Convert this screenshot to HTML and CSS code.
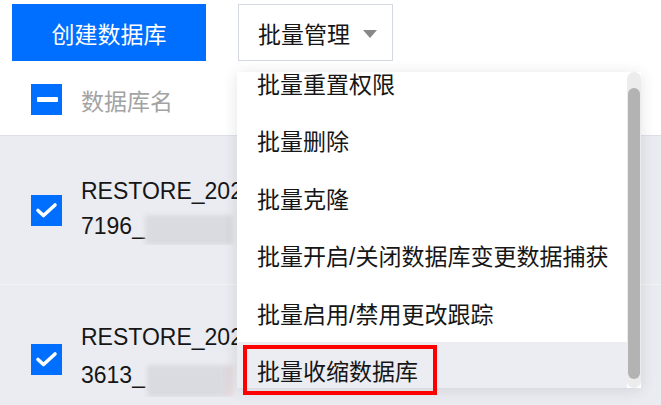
FILE: index.html
```html
<!DOCTYPE html>
<html lang="zh-CN">
<head>
<meta charset="utf-8">
<title>数据库</title>
<link rel="stylesheet" href="styles.css">
</head>
<body>
<div class="page">
  <div class="toolbar">
    <button class="btn btn-primary">创建数据库</button>
    <button class="btn btn-default"><span class="btn-label">批量管理</span><i class="caret"></i></button>
  </div>
  <div class="table">
    <div class="thead">
      <span class="cb">
        <svg width="31" height="31" viewBox="0 0 31 31"><rect x="6" y="13" width="21" height="5" rx="1" fill="#fff"/></svg>
      </span>
      <span class="th-text">数据库名</span>
    </div>
    <div class="row">
      <span class="cb">
        <svg width="31" height="31" viewBox="0 0 31 31"><polyline points="7,15.5 12.5,20.5 24,10" fill="none" stroke="#fff" stroke-width="3.6" stroke-linecap="round" stroke-linejoin="round"/></svg>
      </span>
      <div class="name">
        <div class="line">RESTORE_20240308_150000_9127</div>
        <div class="line">7196_<span class="blur b1"></span></div>
      </div>
    </div>
    <div class="row">
      <span class="cb">
        <svg width="31" height="31" viewBox="0 0 31 31"><polyline points="7,15.5 12.5,20.5 24,10" fill="none" stroke="#fff" stroke-width="3.6" stroke-linecap="round" stroke-linejoin="round"/></svg>
      </span>
      <div class="name">
        <div class="line">RESTORE_20240308_150000_4418</div>
        <div class="line">3613_<span class="blur b2"></span></div>
      </div>
    </div>
  </div>

  <div class="dropdown">
    <ul class="menu">
      <li class="item">批量重置权限</li>
      <li class="item">批量删除</li>
      <li class="item">批量克隆</li>
      <li class="item">批量开启/关闭数据库变更数据捕获</li>
      <li class="item">批量启用/禁用更改跟踪</li>
      <li class="item active">批量收缩数据库</li>
    </ul>
    <div class="scroll-track"><div class="scroll-thumb"></div></div>
  </div>
  <div class="annot"></div>
</div>
</body>
</html>
```

FILE: styles.css
```css
* { box-sizing: border-box; }
html, body {
  margin: 0;
  padding: 0;
  background: #fff;
}
body {
  width: 661px;
  height: 405px;
  overflow: hidden;
  font-family: "Liberation Sans", "Noto Sans CJK SC", sans-serif;
  font-size: 23px;
  color: #161616;
}
.page {
  position: relative;
  width: 661px;
  height: 405px;
  overflow: hidden;
}
.toolbar {
  display: flex;
  gap: 32px;
  padding: 4px 0 0 12px;
}
.btn {
  height: 57px;
  font-family: "Liberation Sans", "Noto Sans CJK SC", sans-serif;
  font-size: 23px;
  border-radius: 0;
  margin: 0;
  display: flex;
  align-items: center;
  white-space: nowrap;
  cursor: pointer;
}
.btn-primary {
  width: 194px;
  justify-content: center;
  background: #006eff;
  color: #fff;
  border: 0;
}
.btn-default {
  width: 155px;
  background: #fff;
  color: #161616;
  border: 1px solid #d3d8e1;
  padding: 0 0 0 19px;
  gap: 13px;
}
.btn-label { flex: none; }
.caret {
  flex: none;
  width: 0;
  height: 0;
  border-left: 7px solid transparent;
  border-right: 7px solid transparent;
  border-top: 8px solid #888;
  margin-top: 2px;
}
.table {
  margin-top: 3px;
}
.thead {
  height: 72px;
  display: flex;
  align-items: center;
  gap: 19px;
  padding-left: 31px;
  border-bottom: 1px solid #dde0e6;
}
.cb {
  width: 31px;
  height: 31px;
  background: #006eff;
  display: block;
  flex: none;
}
.cb svg { display: block; }
.th-text {
  color: #a3a3a3;
}
.row {
  height: 149px;
  background: #ebecf1;
  display: flex;
  align-items: center;
  gap: 19px;
  padding-left: 31px;
  border-bottom: 1px solid #f2f3f6;
}
.name {
  line-height: 35px;
  margin-top: -2px;
  width: 156px;
  overflow: hidden;
}
.line {
  white-space: nowrap;
  display: flex;
  align-items: center;
}
.blur {
  display: inline-block;
  height: 30px;
  background: #dadbe0;
  filter: blur(2px);
}
.b1 { width: 88px; margin-top: 6px; }
.b2 { width: 86px; margin-left: 2px; margin-top: 10px; height: 32px; background: linear-gradient(90deg, #dadbe0 85%, #e6d9dc); }

.dropdown {
  position: absolute;
  left: 237px;
  top: 72px;
  width: 404px;
  height: 316px;
  background: #fff;
  overflow: hidden;
  box-shadow: 0 2px 14px rgba(40, 45, 60, 0.13);
}
.menu {
  list-style: none;
  margin: -18px 0 0 0;
  padding: 0;
  width: 390px;
}
.item {
  height: 57.5px;
  display: flex;
  align-items: center;
  padding-left: 20px;
  white-space: nowrap;
  color: #161616;
}
.item.active {
  background: #ebedf2;
}
.scroll-track {
  position: absolute;
  right: 0;
  top: 0;
  width: 14px;
  height: 316px;
  background: #ececec;
  border-radius: 7px;
}
.scroll-thumb {
  position: absolute;
  left: 1px;
  top: 16px;
  width: 12px;
  height: 291px;
  background: #b3b3b3;
  border-radius: 6px;
}
.annot {
  position: absolute;
  left: 243px;
  top: 345px;
  width: 194px;
  height: 50px;
  border: 4px solid #ff0000;
}
```
